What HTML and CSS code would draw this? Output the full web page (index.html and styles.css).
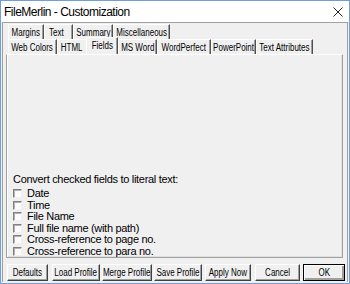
FILE: index.html
```html
<!DOCTYPE html>
<html>
<head>
<meta charset="utf-8">
<link rel="stylesheet" href="styles.css">
</head>
<body>
<div class="window">
  <div class="titlebar">
    <span class="title">FileMerlin - Customization</span>
    <svg class="close" width="10" height="10" viewBox="0 0 10 10"><path d="M0.5 0.5 L9.5 9.5 M9.5 0.5 L0.5 9.5" stroke="#222" stroke-width="1" fill="none"/></svg>
  </div>
  <div class="client">
    <div class="tabs">
      <div class="tabrow">
        <div class="tab t-margins"><span class="lbl">Margins</span></div>
        <div class="tab t-text"><span class="lbl">Text</span></div>
        <div class="tab t-summary"><span class="lbl">Summary</span></div>
        <div class="tab t-misc"><span class="lbl">Miscellaneous</span></div>
      </div>
      <div class="tabrow">
        <div class="tab t-web"><span class="lbl">Web Colors</span></div>
        <div class="tab t-html"><span class="lbl">HTML</span></div>
        <div class="tab t-fields active"><span class="lbl">Fields</span></div>
        <div class="tab t-msword"><span class="lbl">MS Word</span></div>
        <div class="tab t-wp"><span class="lbl">WordPerfect</span></div>
        <div class="tab t-pp"><span class="lbl">PowerPoint</span></div>
        <div class="tab t-attr"><span class="lbl">Text Attributes</span></div>
      </div>
    </div>
    <div class="panel">
      <div class="fields">
        <div class="caption">Convert checked fields to literal text:</div>
        <label class="check"><span class="box"></span>Date</label>
        <label class="check"><span class="box"></span>Time</label>
        <label class="check"><span class="box"></span>File Name</label>
        <label class="check"><span class="box"></span>Full file name (with path)</label>
        <label class="check"><span class="box"></span>Cross-reference to page no.</label>
        <label class="check"><span class="box"></span>Cross-reference to para no.</label>
      </div>
    </div>
    <div class="buttons">
      <div class="btn b-defaults"><span class="lbl">Defaults</span></div>
      <div class="btn b-load"><span class="lbl">Load Profile</span></div>
      <div class="btn b-merge"><span class="lbl">Merge Profile</span></div>
      <div class="btn b-save"><span class="lbl">Save Profile</span></div>
      <div class="btn b-apply"><span class="lbl">Apply Now</span></div>
      <div class="btn b-cancel"><span class="lbl">Cancel</span></div>
      <div class="btn b-ok default"><span class="lbl">OK</span></div>
    </div>
  </div>
</div>
</body>
</html>
```
FILE: styles.css
```css
* { box-sizing: border-box; }
html, body { margin: 0; padding: 0; }
body {
  width: 350px;
  height: 284px;
  overflow: hidden;
  background: #fff;
  font-family: "Liberation Sans", Arial, sans-serif;
  font-size: 11px;
  letter-spacing: -0.3px;
  color: #000;
}
.window {
  width: 350px;
  height: 284px;
  border: 1px solid #6f9fd8;
  display: flex;
  flex-direction: column;
  background: #f0f0f0;
}
.titlebar {
  height: 21px;
  background: #fff;
  display: flex;
  align-items: center;
  justify-content: space-between;
  padding: 0 6px 0 3px;
  flex: none;
}
.title {
  font-size: 12px;
  letter-spacing: -0.5px;
  color: #000;
}
.close { display: block; margin-top: 1px; }
.client {
  flex: 1;
  margin: 0 1px 1px 1px;
  border-top: 1px solid #a0a0a0;
  border-left: 1px solid #a0a0a0;
  border-right: 1px solid #a0a0a0;
  display: flex;
  flex-direction: column;
  padding: 1px 2px 0 3px;
}
.tabs {
  display: flex;
  flex-direction: column;
  padding-left: 2px;
  flex: none;
}
.tabrow {
  display: flex;
  height: 15px;
}
.tab, .btn {
  font-size: 10px;
  letter-spacing: 0;
  display: flex;
  justify-content: center;
  align-items: center;
  white-space: nowrap;
  overflow: visible;
}
.lbl {
  display: inline-block;
  transform: scaleX(0.8);
  transform-origin: center;
}
.tab {
  height: 15px;
  border-top: 1px solid #fff;
  border-left: 1px solid #fff;
  border-right: 1px solid #505050;
  box-shadow: inset -1px 0 0 #a0a0a0;
  padding-top: 1px;
}
.t-margins { width: 36px; }
.t-text { width: 29px; justify-content: flex-start; padding-left: 0; }
.t-text .lbl { transform-origin: left center; margin-left: 4px; }
.t-summary { width: 40px; }
.t-misc { width: 57px; }
.t-web { width: 49px; }
.t-html { width: 29px; border-right-color: transparent; box-shadow: none; }
.t-fields { width: 32px; }
.t-msword { width: 39px; }
.t-wp { width: 54px; }
.t-pp { width: 45px; }
.t-attr { width: 57px; }
.tab.active {
  height: 17px;
  margin-top: -2px;
  margin-bottom: -1px;
  padding-top: 0;
  padding-bottom: 2px;
  background: #f0f0f0;
  position: relative;
  z-index: 2;
}
.panel {
  height: 204px;
  border-top: 1px solid #fff;
  border-left: 1px solid #a0a0a0;
  border-right: 1px solid #a0a0a0;
  border-bottom: 1px solid #a0a0a0;
  box-shadow: inset 1px 0 0 #fff, inset -1px -1px 0 #e0e0e0;
  display: flex;
  flex-direction: column;
  justify-content: flex-end;
  padding: 0 0 0 6px;
  margin-right: 2px;
  flex: none;
}
.fields { display: flex; flex-direction: column; }
.caption { height: 13px; line-height: 13px; margin-bottom: 2px; }
.check {
  display: flex;
  align-items: center;
  height: 11.5px;
  line-height: 11px;
}
.box {
  width: 9px;
  height: 9px;
  margin-right: 5px;
  background: #fcfcfc;
  border: 1px solid;
  border-color: #808080 #f0f0f0 #f0f0f0 #808080;
  box-shadow: inset 1px 1px 0 #b0b0b0;
  flex: none;
}
.buttons {
  display: flex;
  gap: 2px;
  margin-top: 6px;
  padding-left: 1px;
}
.btn {
  height: 17px;
  border: 1px solid;
  border-color: #fff #404040 #404040 #fff;
  box-shadow: inset -1px -1px 0 #a0a0a0;
}
.b-defaults { width: 42px; margin-right: 2px; }
.b-load { width: 48px; }
.b-merge { width: 50px; }
.b-save { width: 48px; }
.b-apply { width: 46px; margin-left: 1px; }
.b-cancel { width: 47px; margin-left: 2px; }
.b-ok { width: 43px; margin-left: 1px; }
.btn.default {
  border: 1px solid #000;
  box-shadow: inset 1px 1px 0 #fff, inset -2px -2px 0 #a0a0a0, inset -1px -1px 0 #404040;
}
```
